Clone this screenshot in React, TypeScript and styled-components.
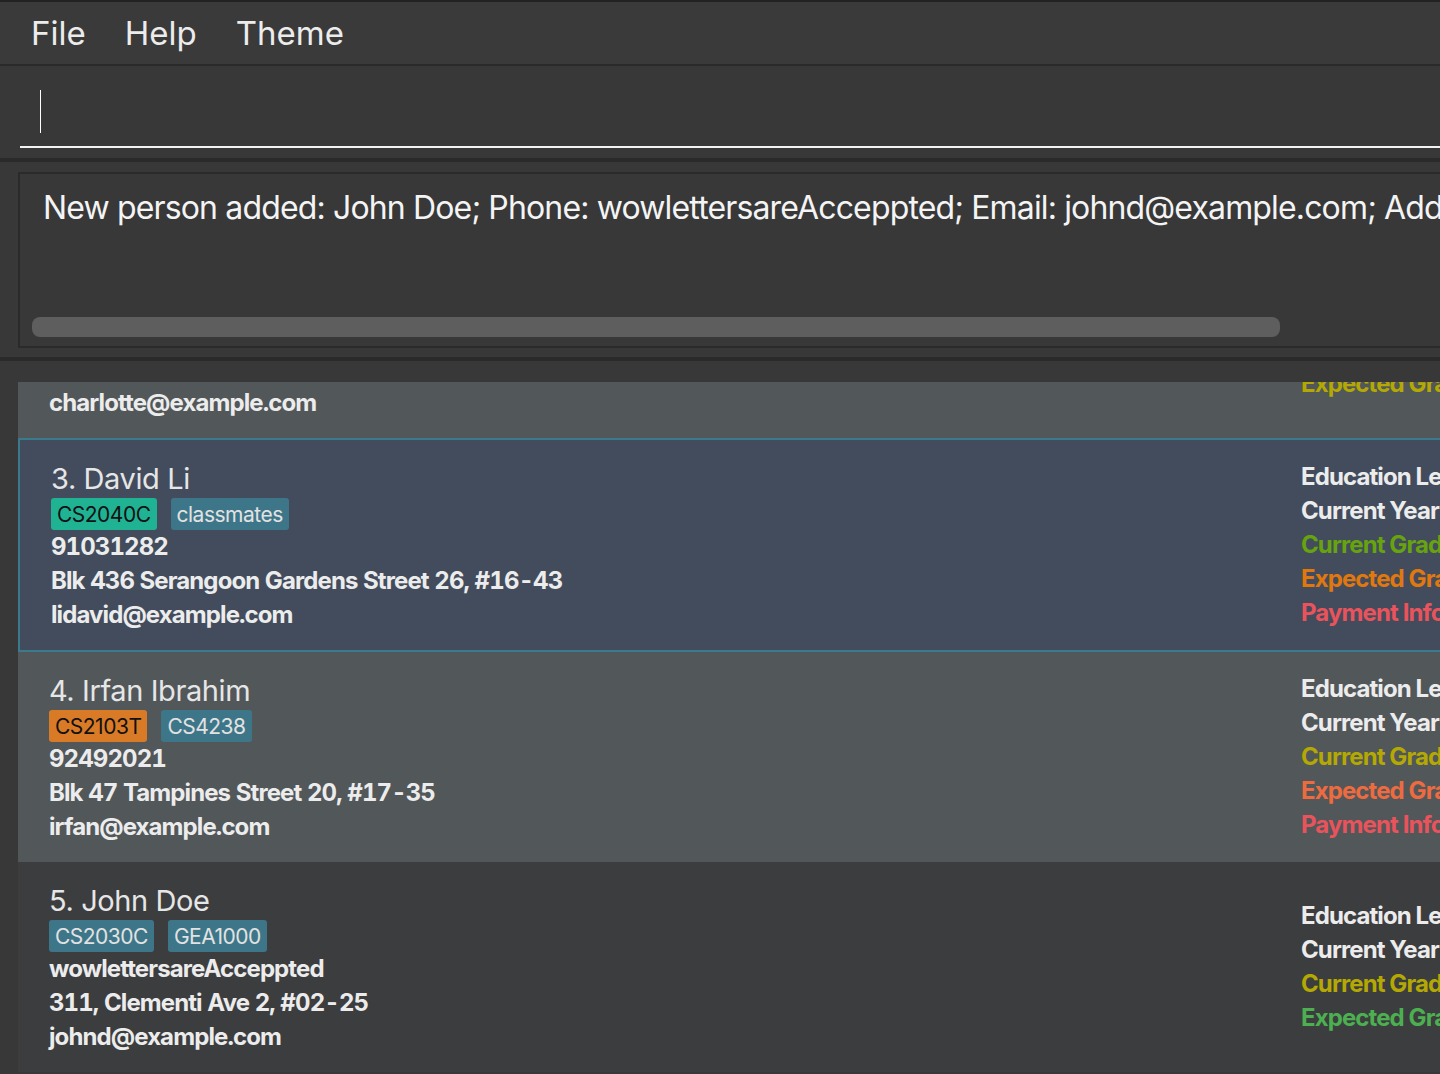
import React from "react";
import styled, { createGlobalStyle } from "styled-components";

const GlobalStyle = createGlobalStyle`
  html, body {
    margin: 0;
    padding: 0;
    overflow: hidden;
    background: #383838;
  }
  body {
    font-family: Inter, "Noto Sans", "Liberation Sans", sans-serif;
  }
`;

type Tone = "white" | "green" | "orange" | "red" | "yellow" | "salmon" | "lime";
type CardKind = "plain" | "selected" | "dark";
type TagKind = "teal" | "orange" | "blue";

interface Tag {
  label: string;
  kind: TagKind;
}

interface Info {
  label: string;
  tone: Tone;
}

interface Person {
  index: number;
  name: string;
  tags: Tag[];
  phone: string;
  address: string;
  email: string;
  info: Info[];
  kind: CardKind;
}

const toneColor: Record<Tone, string> = {
  white: "#ececec",
  green: "#67a30f",
  orange: "#e0780e",
  red: "#e9535b",
  yellow: "#b4a802",
  salmon: "#ee6b40",
  lime: "#4caf50",
};

const cardBg: Record<CardKind, string> = {
  plain: "#52575a",
  selected: "#424c5d",
  dark: "#3c3d3f",
};

const tagStyle: Record<TagKind, { bg: string; fg: string }> = {
  teal: { bg: "#1fb394", fg: "#111" },
  orange: { bg: "#d97a27", fg: "#111" },
  blue: { bg: "#3e7689", fg: "#e2e2e2" },
};

const people: Person[] = [
  {
    index: 2,
    name: "Charlotte Oliveiro",
    tags: [{ label: "neighbours", kind: "blue" }],
    phone: "93210283",
    address: "Blk 11 Ang Mo Kio Street 74, #11-04",
    email: "charlotte@example.com",
    info: [
      { label: "Education Level", tone: "white" },
      { label: "Current Year", tone: "white" },
      { label: "Current Grade", tone: "yellow" },
      { label: "Expected Grade", tone: "yellow" },
    ],
    kind: "plain",
  },
  {
    index: 3,
    name: "David Li",
    tags: [
      { label: "CS2040C", kind: "teal" },
      { label: "classmates", kind: "blue" },
    ],
    phone: "91031282",
    address: "Blk 436 Serangoon Gardens Street 26, #16-43",
    email: "lidavid@example.com",
    info: [
      { label: "Education Level", tone: "white" },
      { label: "Current Year", tone: "white" },
      { label: "Current Grade", tone: "green" },
      { label: "Expected Grade", tone: "orange" },
      { label: "Payment Info", tone: "red" },
    ],
    kind: "selected",
  },
  {
    index: 4,
    name: "Irfan Ibrahim",
    tags: [
      { label: "CS2103T", kind: "orange" },
      { label: "CS4238", kind: "blue" },
    ],
    phone: "92492021",
    address: "Blk 47 Tampines Street 20, #17-35",
    email: "irfan@example.com",
    info: [
      { label: "Education Level", tone: "white" },
      { label: "Current Year", tone: "white" },
      { label: "Current Grade", tone: "yellow" },
      { label: "Expected Grade", tone: "salmon" },
      { label: "Payment Info", tone: "red" },
    ],
    kind: "plain",
  },
  {
    index: 5,
    name: "John Doe",
    tags: [
      { label: "CS2030C", kind: "blue" },
      { label: "GEA1000", kind: "blue" },
    ],
    phone: "wowlettersareAcceppted",
    address: "311, Clementi Ave 2, #02-25",
    email: "johnd@example.com",
    info: [
      { label: "Education Level", tone: "white" },
      { label: "Current Year", tone: "white" },
      { label: "Current Grade", tone: "yellow" },
      { label: "Expected Grade", tone: "lime" },
    ],
    kind: "dark",
  },
];

const resultText =
  "New person added: John Doe; Phone: wowlettersareAcceppted; Email: johnd@example.com; Address: 311, Clementi Ave 2, #02-25; Tags: [CS2030C][GEA1000]";

export default function App() {
  return (
    <>
      <GlobalStyle />
      <Window>
        <MenuBar>
          <MenuItem>File</MenuItem>
          <MenuItem>Help</MenuItem>
          <MenuItem>Theme</MenuItem>
        </MenuBar>

        <CommandSection>
          <CommandField>
            <Caret />
          </CommandField>
        </CommandSection>

        <ResultSection>
          <ResultBox>
            <ResultText>{resultText}</ResultText>
            <ScrollTrack>
              <ScrollThumb />
            </ScrollTrack>
          </ResultBox>
        </ResultSection>

        <ListSection>
          <ListViewport>
            <ListScroller>
              {people.map((p) => (
                <PersonCard key={p.index} $kind={p.kind}>
                  <Details>
                    <Name>
                      {p.index}. {p.name}
                    </Name>
                    <TagRow>
                      {p.tags.map((t) => (
                        <TagChip key={t.label} $kind={t.kind}>
                          {t.label}
                        </TagChip>
                      ))}
                    </TagRow>
                    <Field>{p.phone}</Field>
                    <Field>{p.address}</Field>
                    <Field>{p.email}</Field>
                  </Details>
                  <InfoColumn>
                    {p.info.map((i) => (
                      <InfoLine key={i.label} $tone={i.tone}>
                        {i.label}
                      </InfoLine>
                    ))}
                  </InfoColumn>
                </PersonCard>
              ))}
            </ListScroller>
          </ListViewport>
        </ListSection>
      </Window>
    </>
  );
}

const Window = styled.div`
  width: 1720px;
  height: 1074px;
  display: flex;
  flex-direction: column;
  background: #383838;
  border-top: 2px solid #222222;
  box-sizing: border-box;
  overflow: hidden;
`;

const MenuBar = styled.div`
  height: 64px;
  display: flex;
  align-items: center;
  gap: 39px;
  padding-left: 31px;
  box-sizing: border-box;
  background: #3a3a3a;
  border-bottom: 2px solid #2a2a2a;
  flex-shrink: 0;
`;

const MenuItem = styled.span`
  font-size: 33px;
  color: #ececec;
  line-height: 1;
`;

const CommandSection = styled.div`
  height: 96px;
  padding-left: 20px;
  border-bottom: 4px solid #2a2a2a;
  box-sizing: border-box;
  flex-shrink: 0;
  display: flex;
  align-items: flex-start;
`;

const CommandField = styled.div`
  flex: 1;
  height: 82px;
  border-bottom: 2px solid #f2f2f2;
  padding-left: 20px;
  padding-top: 24px;
  box-sizing: border-box;
`;

const Caret = styled.div`
  width: 1px;
  height: 43px;
  background: #ffffff;
`;

const ResultSection = styled.div`
  height: 199px;
  padding: 10px 0 0 18px;
  border-bottom: 4px solid #2a2a2a;
  box-sizing: border-box;
  flex-shrink: 0;
`;

const ResultBox = styled.div`
  height: 176px;
  box-sizing: border-box;
  border: 2px solid #2a2a2a;
  border-right: none;
  display: flex;
  flex-direction: column;
  justify-content: space-between;
  padding: 12px 0 9px 12px;
  overflow: hidden;
`;

const ResultText = styled.div`
  font-size: 32px;
  line-height: 44px;
  color: #f4f4f4;
  white-space: nowrap;
  padding-left: 11px;
  letter-spacing: -0.85px;
`;

const ScrollTrack = styled.div`
  height: 20px;
`;

const ScrollThumb = styled.div`
  width: 1248px;
  height: 20px;
  border-radius: 8px;
  background: #5e5e5e;
`;

const ListSection = styled.div`
  flex: 1;
  min-height: 0;
  padding: 21px 0 0 18px;
  display: flex;
  flex-direction: column;
`;

const ListViewport = styled.div`
  flex: 1;
  overflow: hidden;
`;

const ListScroller = styled.div`
  margin-top: -154px;
  display: flex;
  flex-direction: column;
`;

const PersonCard = styled.div<{ $kind: CardKind }>`
  display: flex;
  align-items: center;
  height: 210px;
  padding: 0 ${({ $kind }) => ($kind === "selected" ? 37 : 39)}px 0 31px;
  background: ${({ $kind }) => cardBg[$kind]};
  border: ${({ $kind }) => ($kind === "selected" ? "2px solid #3b7a8c" : "none")};
  flex-shrink: 0;
`;

const Details = styled.div`
  flex: 1;
  align-self: stretch;
  display: flex;
  flex-direction: column;
  padding-top: 20px;
  box-sizing: border-box;
  white-space: nowrap;
`;

const Name = styled.div`
  font-size: 29px;
  line-height: 38px;
  color: #e6e6e6;
  letter-spacing: -0.4px;
`;

const TagRow = styled.div`
  display: flex;
  gap: 14px;
  height: 32px;
`;

const TagChip = styled.span<{ $kind: TagKind }>`
  display: inline-flex;
  align-items: center;
  height: 32px;
  padding: 0 6px;
  border-radius: 3px;
  font-size: 21px;
  letter-spacing: -0.5px;
  background: ${({ $kind }) => tagStyle[$kind].bg};
  color: ${({ $kind }) => tagStyle[$kind].fg};
`;

const Field = styled.div`
  font-size: 24px;
  font-weight: 700;
  line-height: 34px;
  color: #ececec;
  letter-spacing: -0.9px;
  font-variant-numeric: tabular-nums;
`;

const InfoColumn = styled.div`
  width: 380px;
  display: flex;
  flex-direction: column;
  white-space: nowrap;
`;

const InfoLine = styled.div<{ $tone: Tone }>`
  font-size: 24px;
  font-weight: 700;
  line-height: 34px;
  letter-spacing: -0.9px;
  color: ${({ $tone }) => toneColor[$tone]};
`;
